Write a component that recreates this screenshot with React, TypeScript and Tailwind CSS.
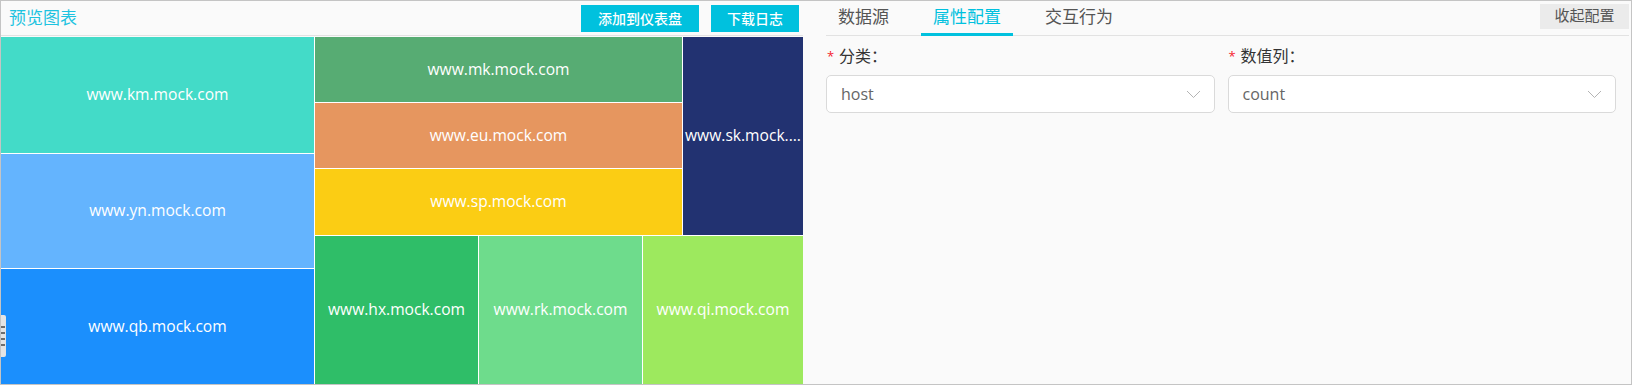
function Block({ label, color, className }: { label: string; color: string; className: string }) {
  return (
    <div
      className={`${className} ${color} flex items-center justify-center overflow-hidden whitespace-nowrap text-white text-[15.6px]`}
    >
      {label}
    </div>
  )
}

function Chevron() {
  return (
    <svg width="15" height="9" viewBox="0 0 15 9" fill="none" className="shrink-0">
      <polyline points="1,1 7.5,7.5 14,1" stroke="#b4b4b4" strokeWidth="1" />
    </svg>
  )
}

function Field({ label, value }: { label: string; value: string }) {
  return (
    <div className="pr-[13px]">
      <div className="flex items-center h-[22px] mt-[9px] text-[16px] text-[#333]">
        <span className="text-[#f5222d] text-[13px] w-[13px] pl-px leading-none">*</span>
        <span>{label}</span>
      </div>
      <div className="mt-[8px] h-[38px] rounded-[5px] border border-[#dadada] bg-white flex items-center justify-between pl-[14px] pr-[13px]">
        <span className="text-[16px] text-[#666]">{value}</span>
        <Chevron />
      </div>
    </div>
  )
}

export default function App() {
  const tabs = ['数据源', '属性配置', '交互行为']
  const active = 1

  return (
    <div className="w-[1632px] h-[385px] border border-[#c4c4c4] bg-[#fafafa] flex font-['Open_Sans','Noto_Sans_CJK_SC',sans-serif]">
      {/* chart panel */}
      <div className="w-[802px] flex flex-col">
        <div className="h-[35px] border-b border-[#e2e2e2] flex items-center justify-between pl-2 pr-1">
          <span className="text-[17px] text-[#1ec3e0]">预览图表</span>
          <div className="flex gap-3">
            <button className="h-[27px] w-[118px] bg-[#00c1de] text-white text-[14px] font-medium">添加到仪表盘</button>
            <button className="h-[27px] w-[88px] bg-[#00c1de] text-white text-[14px] font-medium">下载日志</button>
          </div>
        </div>
        <div className="mt-px flex-1 flex gap-px bg-white relative">
          <div className="w-[313px] flex flex-col gap-px">
            <Block label="www.km.mock.com" color="bg-[#43dbc8]" className="h-[116px]" />
            <Block label="www.yn.mock.com" color="bg-[#64b4fe]" className="h-[114px]" />
            <Block label="www.qb.mock.com" color="bg-[#1b8ffd]" className="flex-1" />
          </div>
          <div className="flex-1 flex flex-col gap-px">
            <div className="h-[198px] flex gap-px">
              <div className="w-[367px] flex flex-col gap-px">
                <Block label="www.mk.mock.com" color="bg-[#57ac73]" className="h-[65px]" />
                <Block label="www.eu.mock.com" color="bg-[#e6965f]" className="h-[65px]" />
                <Block label="www.sp.mock.com" color="bg-[#fbcd14]" className="flex-1" />
              </div>
              <Block label="www.sk.mock...." color="bg-[#223271]" className="flex-1" />
            </div>
            <div className="flex-1 flex gap-px">
              <Block label="www.hx.mock.com" color="bg-[#2fbe68]" className="w-[163px]" />
              <Block label="www.rk.mock.com" color="bg-[#6edc8c]" className="w-[163px]" />
              <Block label="www.qi.mock.com" color="bg-[#9de95e]" className="flex-1" />
            </div>
          </div>
          {/* resize handle */}
          <div className="absolute left-0 top-[278px] w-[5px] h-[42px] bg-[#e4e4e4] rounded-r-[2px] flex flex-col items-start justify-center gap-[4px]">
            <span className="w-[4px] h-[2px] bg-[#6e6e6e]" />
            <span className="w-[4px] h-[2px] bg-[#6e6e6e]" />
            <span className="w-[4px] h-[2px] bg-[#6e6e6e]" />
            <span className="w-[4px] h-[2px] bg-[#6e6e6e]" />
          </div>
        </div>
      </div>

      {/* config panel */}
      <div className="flex-1 pl-[23px] pr-[2px]">
        <div className="h-[35px] border-b border-[#e2e2e2] flex justify-between">
          <div className="flex gap-5">
            {tabs.map((t, i) => (
              <div
                key={t}
                className={`relative px-3 flex items-center pb-[2px] text-[17px] ${i === active ? 'text-[#00c1de]' : 'text-[#555]'}`}
              >
                {t}
                {i === active && <span className="absolute left-0 right-0 bottom-[-1px] h-[3px] bg-[#00c1de]" />}
              </div>
            ))}
          </div>
          <button className="mt-[3px] h-[25px] w-[89px] bg-[#ebebeb] text-[15px] leading-[20px] text-[#555] flex items-start justify-center pt-[1px]">
            收起配置
          </button>
        </div>
        <div className="grid grid-cols-2">
          <Field label="分类：" value="host" />
          <Field label="数值列：" value="count" />
        </div>
      </div>
    </div>
  )
}
